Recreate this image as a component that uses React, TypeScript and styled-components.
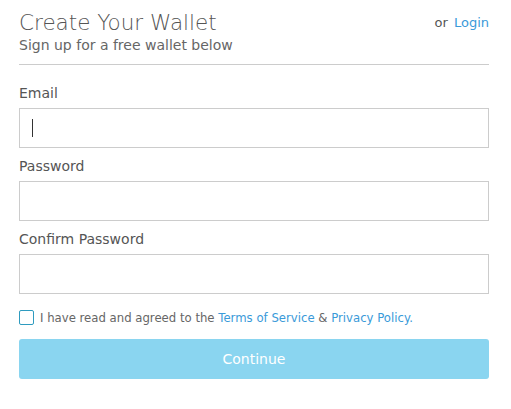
import styled, { createGlobalStyle } from "styled-components";

const GlobalStyle = createGlobalStyle`
  body {
    margin: 0;
    background: #ffffff;
    font-family: "DejaVu Sans", "Open Sans", sans-serif;
    color: #555555;
  }
`;

const Page = styled.div`
  width: 470px;
  padding: 9px 22px 0 19px;
`;

const Header = styled.header`
  display: flex;
  justify-content: space-between;
  align-items: flex-start;
  padding-bottom: 10px;
  border-bottom: 1px solid #cccccc;
`;

const Title = styled.h1`
  margin: 0;
  font-size: 21.5px;
  font-weight: 300;
  line-height: 28px;
  color: #555555;
`;

const Subtitle = styled.p`
  margin: 0;
  font-size: 14px;
  line-height: 17px;
  color: #666666;
`;

const LoginNote = styled.span`
  margin-top: 6px;
  font-size: 13px;
  color: #555555;

  a {
    margin-left: 6px;
    color: #3a9ad9;
    text-decoration: none;
  }
`;

const Form = styled.form`
  display: flex;
  flex-direction: column;
  padding-top: 20px;
`;

const Label = styled.label`
  display: block;
  font-size: 14px;
  line-height: 16px;
  color: #555555;
  margin-bottom: 7px;
`;

const Input = styled.input`
  box-sizing: border-box;
  width: 100%;
  height: 40px;
  border: 1px solid #cccccc;
  border-radius: 0;
  margin: 0 0 10px;
  padding: 0 12px;
  font: inherit;
  outline: none;
`;

const Caret = styled.span`
  position: absolute;
  left: 13px;
  top: 11px;
  width: 1px;
  height: 18px;
  background: #333333;
`;

const Field = styled.div`
  position: relative;
`;

const Agree = styled.label`
  display: flex;
  align-items: center;
  gap: 6px;
  margin-top: 6px;
  font-size: 11.7px;
  color: #666666;

  a {
    color: #3a9ad9;
    text-decoration: none;
  }
`;

const Box = styled.span`
  box-sizing: border-box;
  width: 15px;
  height: 15px;
  border: 1.5px solid #2e9bbf;
  border-radius: 2px;
`;

const Button = styled.button`
  margin-top: 14px;
  height: 40px;
  border: none;
  border-radius: 3px;
  background: #8ad5f0;
  color: #ffffff;
  font: inherit;
  font-size: 14px;
`;

export default function App() {
  return (
    <>
      <GlobalStyle />
      <Page>
        <Header>
          <div>
            <Title>Create Your Wallet</Title>
            <Subtitle>Sign up for a free wallet below</Subtitle>
          </div>
          <LoginNote>
            or<a href="#">Login</a>
          </LoginNote>
        </Header>
        <Form onSubmit={(e) => e.preventDefault()}>
          <Label>Email</Label>
          <Field>
            <Input type="email" />
            <Caret />
          </Field>
          <Label>Password</Label>
          <Input type="password" />
          <Label>Confirm Password</Label>
          <Input type="password" />
          <Agree>
            <Box />
            <span>
              I have read and agreed to the <a href="#">Terms of Service</a> &amp;{" "}
              <a href="#">Privacy Policy.</a>
            </span>
          </Agree>
          <Button type="submit">Continue</Button>
        </Form>
      </Page>
    </>
  );
}
